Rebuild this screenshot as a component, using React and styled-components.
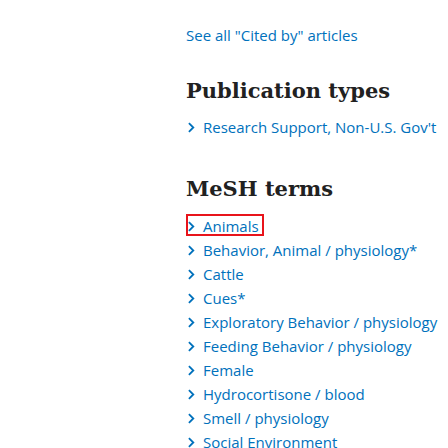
import React from "react";
import styled, { createGlobalStyle } from "styled-components";

const GlobalStyle = createGlobalStyle`
  html, body {
    margin: 0;
    padding: 0;
    background: #fff;
  }
  body {
    font-family: "Open Sans", "Liberation Sans", sans-serif;
  }
`;

const Page = styled.div`
  width: 448px;
  height: 448px;
  overflow: hidden;
  padding: 23px 0 0 186px;
  box-sizing: border-box;
  display: flex;
  flex-direction: column;
  align-items: flex-start;
`;

const Link = styled.a`
  display: block;
  color: #0071bc;
  font-size: 15px;
  line-height: ${(props) => props.lh || "24px"};
  text-decoration: none;
  white-space: nowrap;
`;

const Heading = styled.h2`
  margin: ${(props) => props.top || "0"} 0 0 0;
  font-family: "DejaVu Serif", "Liberation Serif", serif;
  font-weight: bold;
  font-size: 21px;
  line-height: 28px;
  height: 28px;
  color: #212121;
  white-space: nowrap;
`;

const List = styled.ul`
  list-style: none;
  margin: ${(props) => props.top || "0"} 0 0 0;
  padding: 0;
`;

const Item = styled.li`
  display: flex;
  align-items: flex-start;
  height: 24px;
`;

const Term = styled.span`
  display: flex;
  align-items: flex-start;
  gap: 8px;
  height: 22px;
  padding-right: 3px;
  box-sizing: border-box;
  border: 2px solid ${(props) => (props.highlight ? "#e8141b" : "transparent")};
`;

const ChevronBox = styled.span`
  display: flex;
  align-items: center;
  height: 20px;
`;

const Chevron = () => (
  <ChevronBox>
    <svg width="7" height="11" viewBox="0 0 7 11" fill="none">
      <path d="M0.9 1.2l4.4 4.3-4.4 4.3" stroke="#0071bc" strokeWidth="1.8" />
    </svg>
  </ChevronBox>
);

const mesh = [
  "Animals",
  "Behavior, Animal / physiology*",
  "Cattle",
  "Cues*",
  "Exploratory Behavior / physiology",
  "Feeding Behavior / physiology",
  "Female",
  "Hydrocortisone / blood",
  "Smell / physiology",
  "Social Environment",
];

export default function App() {
  return (
    <>
      <GlobalStyle />
      <Page>
        <Link href="#">See all "Cited by" articles</Link>
        <Heading top="30px">Publication types</Heading>
        <List top="10px">
          <Item>
            <Term>
              <Chevron />
              <Link href="#" lh="20px">Research Support, Non-U.S. Gov't</Link>
            </Term>
          </Item>
        </List>
        <Heading top="36px">MeSH terms</Heading>
        <List top="11px">
          {mesh.map((m, i) => (
            <Item key={i}>
              <Term highlight={i === 0}>
                <Chevron />
                <Link href="#" lh="20px">{m}</Link>
              </Term>
            </Item>
          ))}
        </List>
      </Page>
    </>
  );
}
